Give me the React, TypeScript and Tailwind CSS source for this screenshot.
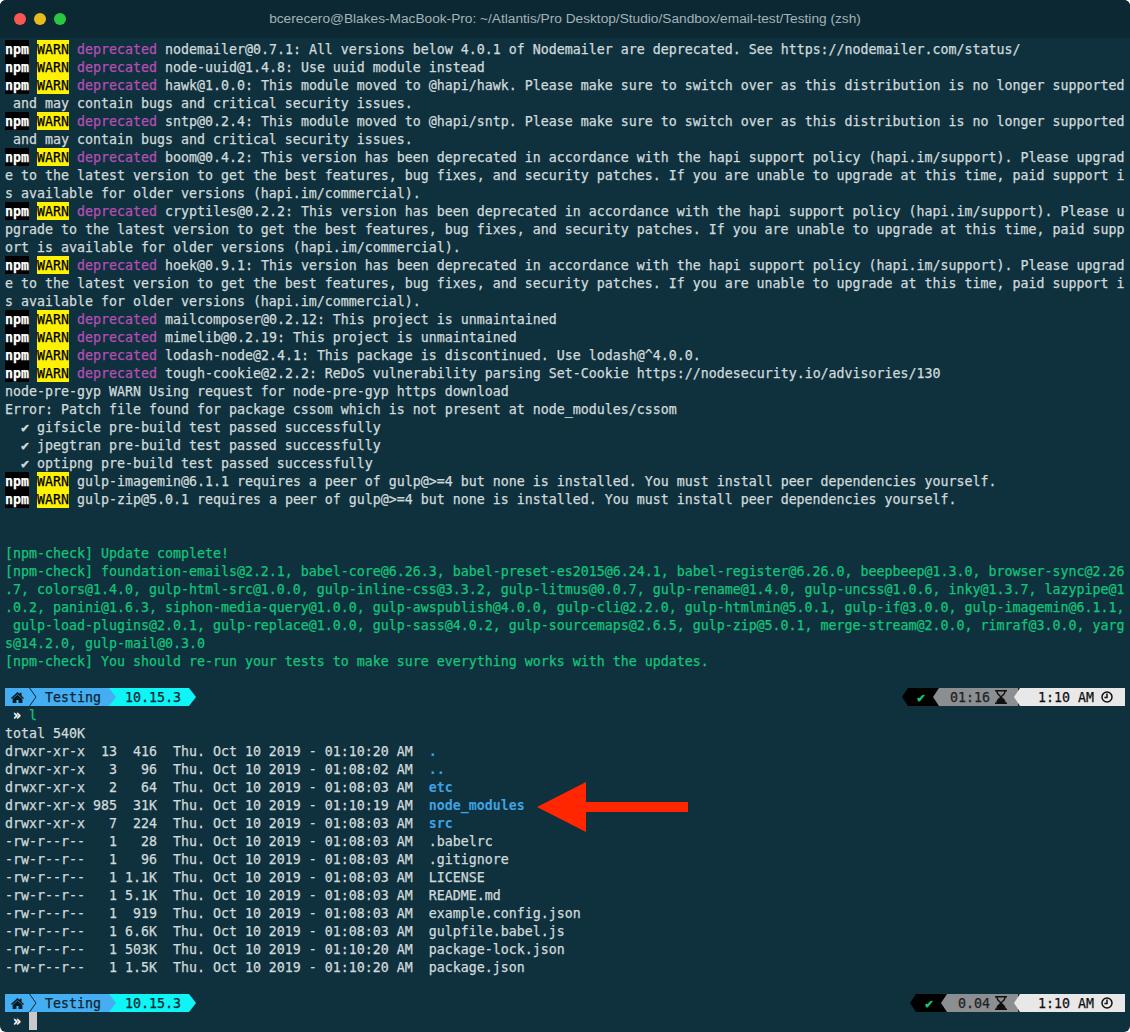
const DEPRECATED: [string, boolean][] = [
    ['nodemailer@0.7.1: All versions below 4.0.1 of Nodemailer are deprecated. See https://nodemailer.com/status/', true],
    ['node-uuid@1.4.8: Use uuid module instead', true],
    ['hawk@1.0.0: This module moved to @hapi/hawk. Please make sure to switch over as this distribution is no longer supported', true],
    [' and may contain bugs and critical security issues.', false],
    ['sntp@0.2.4: This module moved to @hapi/sntp. Please make sure to switch over as this distribution is no longer supported', true],
    [' and may contain bugs and critical security issues.', false],
    ['boom@0.4.2: This version has been deprecated in accordance with the hapi support policy (hapi.im/support). Please upgrad', true],
    ['e to the latest version to get the best features, bug fixes, and security patches. If you are unable to upgrade at this time, paid support i', false],
    ['s available for older versions (hapi.im/commercial).', false],
    ['cryptiles@0.2.2: This version has been deprecated in accordance with the hapi support policy (hapi.im/support). Please u', true],
    ['pgrade to the latest version to get the best features, bug fixes, and security patches. If you are unable to upgrade at this time, paid supp', false],
    ['ort is available for older versions (hapi.im/commercial).', false],
    ['hoek@0.9.1: This version has been deprecated in accordance with the hapi support policy (hapi.im/support). Please upgrad', true],
    ['e to the latest version to get the best features, bug fixes, and security patches. If you are unable to upgrade at this time, paid support i', false],
    ['s available for older versions (hapi.im/commercial).', false],
    ['mailcomposer@0.2.12: This project is unmaintained', true],
    ['mimelib@0.2.19: This project is unmaintained', true],
    ['lodash-node@2.4.1: This package is discontinued. Use lodash@^4.0.0.', true],
    ['tough-cookie@2.2.2: ReDoS vulnerability parsing Set-Cookie https://nodesecurity.io/advisories/130', true],
];

const CHECK_LINES = [
    '[npm-check] Update complete!',
    '[npm-check] foundation-emails@2.2.1, babel-core@6.26.3, babel-preset-es2015@6.24.1, babel-register@6.26.0, beepbeep@1.3.0, browser-sync@2.26',
    '.7, colors@1.4.0, gulp-html-src@1.0.0, gulp-inline-css@3.3.2, gulp-litmus@0.0.7, gulp-rename@1.4.0, gulp-uncss@1.0.6, inky@1.3.7, lazypipe@1',
    '.0.2, panini@1.6.3, siphon-media-query@1.0.0, gulp-awspublish@4.0.0, gulp-cli@2.2.0, gulp-htmlmin@5.0.1, gulp-if@3.0.0, gulp-imagemin@6.1.1,',
    ' gulp-load-plugins@2.0.1, gulp-replace@1.0.0, gulp-sass@4.0.2, gulp-sourcemaps@2.6.5, gulp-zip@5.0.1, merge-stream@2.0.0, rimraf@3.0.0, yarg',
    's@14.2.0, gulp-mail@0.3.0',
    '[npm-check] You should re-run your tests to make sure everything works with the updates.',
];

const FILES: [string, string, boolean][] = [
    ['drwxr-xr-x  13  416  Thu. Oct 10 2019 - 01:10:20 AM  ', '.', true],
    ['drwxr-xr-x   3   96  Thu. Oct 10 2019 - 01:08:02 AM  ', '..', true],
    ['drwxr-xr-x   2   64  Thu. Oct 10 2019 - 01:08:03 AM  ', 'etc', true],
    ['drwxr-xr-x 985  31K  Thu. Oct 10 2019 - 01:10:19 AM  ', 'node_modules', true],
    ['drwxr-xr-x   7  224  Thu. Oct 10 2019 - 01:08:03 AM  ', 'src', true],
    ['-rw-r--r--   1   28  Thu. Oct 10 2019 - 01:08:03 AM  ', '.babelrc', false],
    ['-rw-r--r--   1   96  Thu. Oct 10 2019 - 01:08:03 AM  ', '.gitignore', false],
    ['-rw-r--r--   1 1.1K  Thu. Oct 10 2019 - 01:08:03 AM  ', 'LICENSE', false],
    ['-rw-r--r--   1 5.1K  Thu. Oct 10 2019 - 01:08:03 AM  ', 'README.md', false],
    ['-rw-r--r--   1  919  Thu. Oct 10 2019 - 01:08:03 AM  ', 'example.config.json', false],
    ['-rw-r--r--   1 6.6K  Thu. Oct 10 2019 - 01:08:03 AM  ', 'gulpfile.babel.js', false],
    ['-rw-r--r--   1 503K  Thu. Oct 10 2019 - 01:10:20 AM  ', 'package-lock.json', false],
    ['-rw-r--r--   1 1.5K  Thu. Oct 10 2019 - 01:10:20 AM  ', 'package.json', false],
];

// line box is 2px taller than the row so glyphs sit 1px lower, like the terminal
function Row({ children }: { children?: React.ReactNode }) {
    return <div className="h-[18px] leading-[20px] whitespace-pre">{children}</div>;
}

function WarnRow({ children }: { children?: React.ReactNode }) {
    return (
        <Row>
            <span className="inline-block h-[18px] align-top bg-black text-white font-bold">npm</span>
            {' '}
            <span className="inline-block h-[18px] align-top bg-[#fff200] text-black">WARN</span>
            {' '}
            {children}
        </Row>
    );
}

function HomeIcon() {
    return (
        <svg viewBox="0 0 24 20" className="w-[13px] h-[11px]" fill="#061c25">
            <path d="M12 0 L16 3.6 V1 H19.5 V6.8 L24 11 L22.4 12.8 L12 3.8 L1.6 12.8 L0 11 Z" />
            <path d="M12 5 L21 12.8 V20 H14 V14.5 H10 V20 H3 V12.8 Z" />
        </svg>
    );
}

function LeftPrompt() {
    return (
        <Row>
            <div className="flex h-[18px] text-[#0b2530]">
                <div className="relative z-10 flex items-center w-[111px] h-[18px] pl-[6px] bg-[#45aef2] [clip-path:polygon(0_0,104px_0,100%_50%,104px_100%,0_100%)]">
                    <HomeIcon />
                    <svg viewBox="0 0 8 18" className="w-[8px] h-[18px] ml-[5px]" fill="none" stroke="#0b2530" strokeWidth="1">
                        <path d="M0.5 0 L7 9 L0.5 18" />
                    </svg>
                    <span className="ml-[8px] self-start">Testing</span>
                </div>
                <div className="-ml-[11px] w-[91px] h-[18px] pl-[20px] bg-[#0ff5f5] [clip-path:polygon(0_0,84px_0,100%_50%,84px_100%,0_100%)]">
                    10.15.3
                </div>
            </div>
        </Row>
    );
}

function HourglassIcon() {
    return (
        <svg viewBox="0 0 12 14" className="w-[12px] h-[14px] ml-[5px]" fill="#111">
            <path
                fillRule="evenodd"
                d="M0 0 H12 V1.6 H10.6 C10.6 4.6 8 5.8 7 7 C8 8.2 10.6 9.4 10.6 12.4 H12 V14 H0 V12.4 H1.4 C1.4 9.4 4 8.2 5 7 C4 5.8 1.4 4.6 1.4 1.6 H0 Z M2.8 1.6 C2.8 3.6 4.8 5 6 6 C7.2 5 9.2 3.6 9.2 1.6 Z"
            />
        </svg>
    );
}

function ClockIcon() {
    return (
        <svg viewBox="0 0 12 12" className="w-[12px] h-[12px] ml-[7px]" fill="none" stroke="#111" strokeWidth="1.5">
            <circle cx="6" cy="6" r="5" />
            <path d="M6 2.6 V6.4 H3.4" />
        </svg>
    );
}

function RightPrompt({ blackWidth, grayWidth, elapsed }: { blackWidth: string; grayWidth: string; elapsed: string }) {
    return (
        <div className="flex justify-end h-[18px] -mt-[18px] leading-[20px]">
            <div className={`${blackWidth} h-[18px] pl-[15px] bg-black text-[#19c77a] font-bold [clip-path:polygon(6px_0,100%_0,100%_100%,6px_100%,0_50%)]`}>
                ✔
            </div>
            <div className={`${grayWidth} -ml-[6px] flex items-center justify-end pr-[11px] h-[18px] bg-[#8b8f91] text-[#222] [clip-path:polygon(6px_0,100%_0,100%_100%,6px_100%,0_50%)]`}>
                <span className="self-start">{elapsed}</span>
                <HourglassIcon />
            </div>
            <div className="-ml-[4px] w-[111px] flex items-center pl-[24px] h-[18px] bg-[#e8e8e8] text-[#111] [clip-path:polygon(6px_0,100%_0,100%_100%,6px_100%,0_50%)]">
                <span className="self-start">1:10 AM</span>
                <ClockIcon />
            </div>
        </div>
    );
}

function Chevrons() {
    return <span className="text-white font-bold"> »</span>;
}

export default function App() {
    return (
        <div className="w-[1130px] h-[1032px] bg-white overflow-hidden">
            <div className="relative flex flex-col h-full rounded-[6px] overflow-hidden bg-[#0f303d] text-[#d0dadc] font-['DejaVu_Sans_Mono','Liberation_Mono',monospace] text-[13.29px]">
                <div className="relative flex items-center justify-center h-[38px] shrink-0 bg-[#0c2833]">
                    <div className="absolute left-[14px] top-[13px] flex gap-[8px]">
                        <div className="w-[12px] h-[12px] rounded-full bg-[#fc5652]" />
                        <div className="w-[12px] h-[12px] rounded-full bg-[#e8bb1e]" />
                        <div className="w-[12px] h-[12px] rounded-full bg-[#28c940]" />
                    </div>
                    <span className="font-['Liberation_Sans',sans-serif] text-[13.7px] text-[#a3b3b8]">
                        bcerecero@Blakes-MacBook-Pro: ~/Atlantis/Pro Desktop/Studio/Sandbox/email-test/Testing (zsh)
                    </span>
                </div>

                <div className="px-[5px] pt-[2px] [-webkit-text-stroke:0.25px]">
                    {DEPRECATED.map(([text, warn], i) =>
                        warn ? (
                            <WarnRow key={i}>
                                <span className="text-[#b44fb4]">deprecated</span> {text}
                            </WarnRow>
                        ) : (
                            <Row key={i}>{text}</Row>
                        )
                    )}
                    <Row>node-pre-gyp WARN Using request for node-pre-gyp https download</Row>
                    <Row>Error: Patch file found for package cssom which is not present at node_modules/cssom</Row>
                    <Row>  ✔ gifsicle pre-build test passed successfully</Row>
                    <Row>  ✔ jpegtran pre-build test passed successfully</Row>
                    <Row>  ✔ optipng pre-build test passed successfully</Row>
                    <WarnRow>gulp-imagemin@6.1.1 requires a peer of gulp@&gt;=4 but none is installed. You must install peer dependencies yourself.</WarnRow>
                    <WarnRow>gulp-zip@5.0.1 requires a peer of gulp@&gt;=4 but none is installed. You must install peer dependencies yourself.</WarnRow>
                    <Row />
                    <Row />
                    {CHECK_LINES.map((line, i) => (
                        <Row key={i}>
                            <span className="text-[#13c47a]">{line}</span>
                        </Row>
                    ))}
                    <Row />
                    <LeftPrompt />
                    <RightPrompt blackWidth="w-[37px]" grayWidth="w-[85px]" elapsed="01:16" />
                    <Row>
                        <Chevrons /> <span className="text-[#13c47a]">l</span>
                    </Row>
                    <Row>total 540K</Row>
                    {FILES.map(([meta, name, dir]) => (
                        <Row key={name}>
                            {meta}
                            <span className={dir ? 'text-[#3ea3e2] font-bold [-webkit-text-stroke:0px]' : ''}>{name}</span>
                        </Row>
                    ))}
                    <Row />
                    <LeftPrompt />
                    <RightPrompt blackWidth="w-[37px]" grayWidth="w-[77px]" elapsed="0.04" />
                    <Row>
                        <Chevrons /> <span className="inline-block w-[8px] h-[18px] align-top bg-[#c9c9c9]" />
                    </Row>
                </div>

                <svg viewBox="0 0 152 50" className="absolute left-[537px] top-[782px] w-[152px] h-[50px]">
                    <path d="M0 25 L49 0 V20 H151 V30 H49 V50 Z" fill="#ff2600" />
                </svg>
            </div>
        </div>
    );
}
